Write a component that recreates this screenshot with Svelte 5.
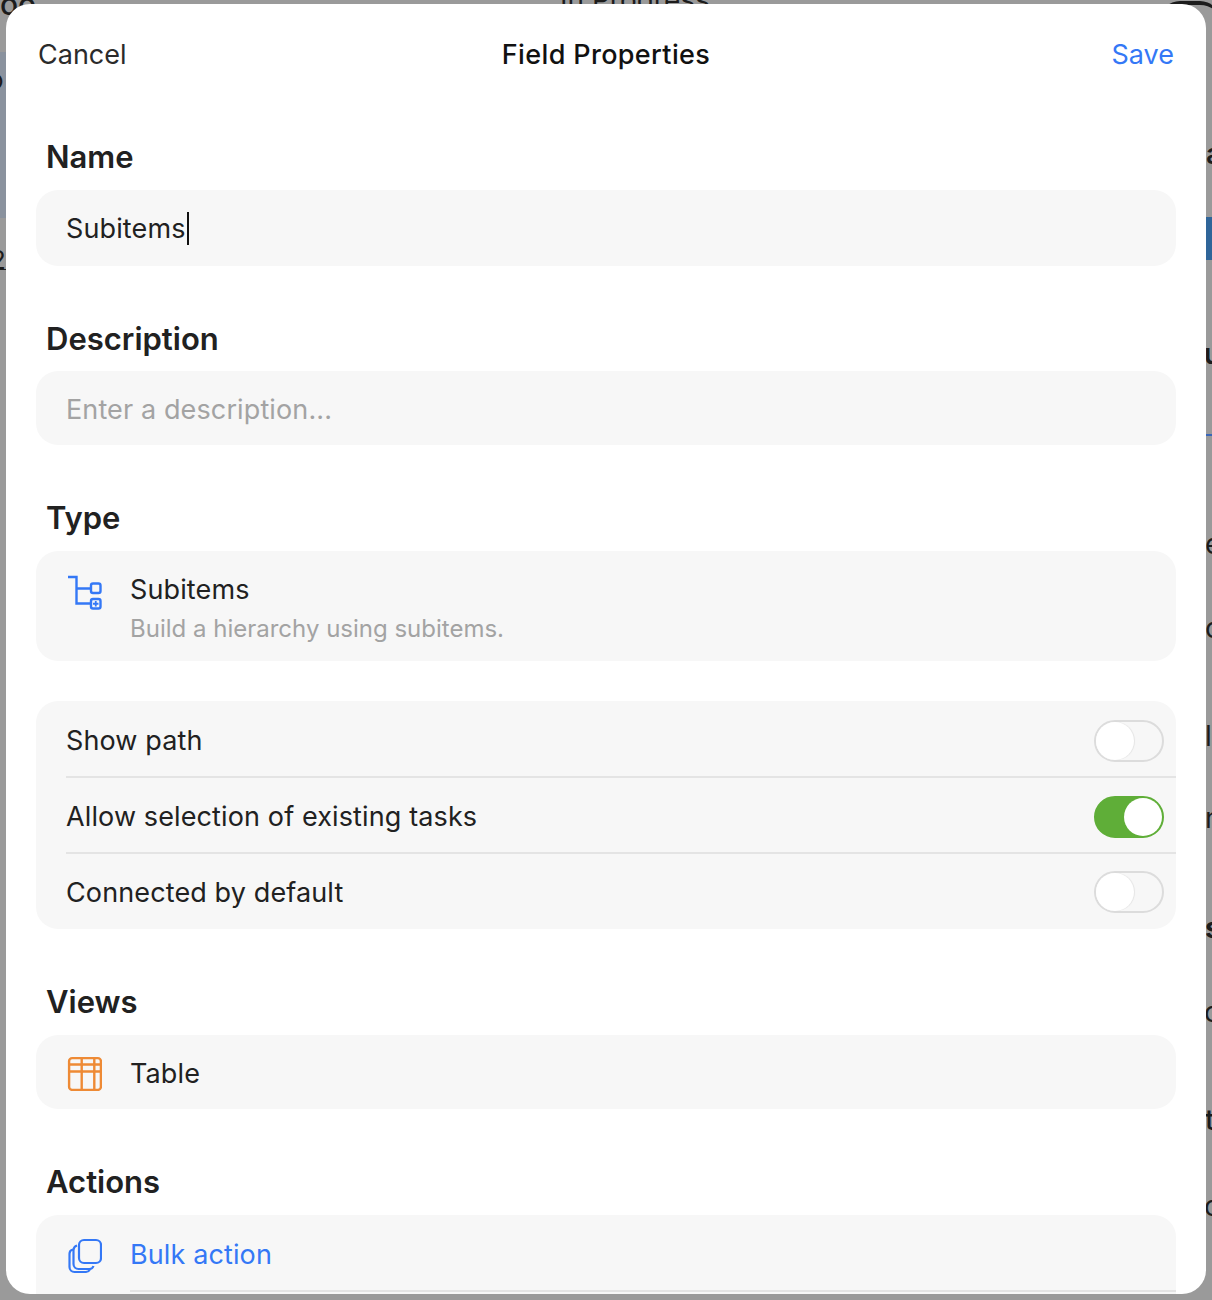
<script>
  const toggles = [
    { label: 'Show path', on: false },
    { label: 'Allow selection of existing tasks', on: true },
    { label: 'Connected by default', on: false }
  ];
  // bits of the page behind the sheet, dimmed by the backdrop
  const behind = [
    { text: 'oo', x: 0, y: -14, size: 30, weight: 500 },
    { text: 'In Progress', x: 560, y: -16, size: 28, weight: 400 },
    { text: 'o', x: -12, y: 64, size: 26, weight: 400 },
    { text: '2', x: -10, y: 244, size: 26, weight: 400 },
    { text: 'l', x: -5, y: 420, size: 26, weight: 400 },
    { text: 'a', x: 1206, y: 138, size: 28, weight: 600 },
    { text: 'u', x: 1204, y: 338, size: 28, weight: 600 },
    { text: 'e', x: 1205, y: 528, size: 28, weight: 400 },
    { text: 'c', x: 1205, y: 612, size: 28, weight: 400 },
    { text: 'll', x: 1205, y: 720, size: 28, weight: 400 },
    { text: 'n', x: 1205, y: 802, size: 28, weight: 400 },
    { text: 's', x: 1205, y: 912, size: 28, weight: 700 },
    { text: 'o', x: 1204, y: 996, size: 28, weight: 400 },
    { text: 't', x: 1205, y: 1104, size: 28, weight: 500 },
    { text: 'o', x: 1204, y: 1190, size: 28, weight: 400 }
  ];
</script>

<div class="page">
  <div class="backdrop-parts">
    <div class="blue-left"></div>
    <div class="blue-right"></div>
    <div class="blue-line"></div>
    <div class="round-corner"></div>
    <div class="under-two"></div>
    {#each behind as b}
      <span class="behind" style="left:{b.x}px;top:{b.y}px;font-size:{b.size}px;font-weight:{b.weight}">{b.text}</span>
    {/each}
  </div>

  <div class="sheet">
    <header class="bar">
      <span class="cancel">Cancel</span>
      <span class="title">Field Properties</span>
      <span class="save">Save</span>
    </header>

    <div class="content">
      <h2 class="first">Name</h2>
      <div class="field name-field"><span>Subitems</span><i class="caret"></i></div>

      <h2 class="desc-label">Description</h2>
      <div class="field placeholder">Enter a description...</div>

      <h2>Type</h2>
      <div class="field type-field">
        <svg class="icon" width="36" height="40" viewBox="0 0 36 40" fill="none" stroke="#3478f6" stroke-width="2.400" aria-hidden="true">
          <path d="M2 5h8.500v26.500h14M10.500 16.500h14" />
          <rect x="25" y="11.500" width="9.500" height="9.500" rx="2" />
          <rect x="25" y="27" width="9.500" height="9.500" rx="2" />
          <path d="M29.750 29v5.500M27 31.750h5.500" stroke-width="1.800" />
        </svg>
        <div class="type-text">
          <div>Subitems</div>
          <div class="sub">Build a hierarchy using subitems.</div>
        </div>
      </div>

      <div class="group">
        {#each toggles as t}
          <div class="row">
            <span>{t.label}</span>
            <span class="switch" class:on={t.on}><i></i></span>
          </div>
        {/each}
      </div>

      <h2 class="views-label">Views</h2>
      <div class="field icon-row">
        <svg class="icon" width="36" height="36" viewBox="0 0 36 36" fill="none" stroke="#ee8a35" stroke-width="2.400" aria-hidden="true">
          <rect x="3.100" y="3.100" width="31.800" height="31.800" rx="3" />
          <path d="M3 9.500h32M3 16.500h32M15.700 3v32M28.300 3v32" />
        </svg>
        <span>Table</span>
      </div>

      <h2 class="actions-label">Actions</h2>
      <div class="field actions">
        <div class="action-row">
          <svg class="icon" width="36" height="38" viewBox="0 0 36 38" fill="none" stroke="#3478f6" stroke-width="2.200" aria-hidden="true">
            <rect x="13" y="4" width="22" height="23" rx="5" />
            <path d="M11 9.500a5 5 0 0 0-3.500 4.500v14a5 5 0 0 0 5 5h11a4.500 4.500 0 0 0 4-3" />
            <path d="M7 13.500a4.500 4.500 0 0 0-3.500 4.500v13a5 5 0 0 0 5 5h11.500a4.500 4.500 0 0 0 4-3" />
          </svg>
          <span class="link">Bulk action</span>
        </div>
      </div>
    </div>
  </div>
</div>

<style>
  :global(body) {
    margin: 0;
  }

  .page {
    position: relative;
    width: 1212px;
    height: 1300px;
    padding: 4px 6px 6px;
    box-sizing: border-box;
    overflow: hidden;
    background: #9a9a9a;
    font-family: Inter, "Liberation Sans", sans-serif;
    color: #212121;
  }

  .backdrop-parts {
    position: absolute;
    inset: 0;
  }

  .behind {
    position: absolute;
    line-height: 1.2;
    color: #1c1c1c;
    white-space: nowrap;
  }

  .blue-left {
    position: absolute;
    left: 0;
    top: 52px;
    width: 6px;
    height: 166px;
    background: #8a929e;
  }

  .under-two {
    position: absolute;
    left: 0;
    top: 269px;
    width: 6px;
    height: 1px;
    background: #222;
  }

  .blue-right {
    position: absolute;
    left: 1206px;
    top: 217px;
    width: 6px;
    height: 43px;
    background: #2f6599;
  }

  .blue-line {
    position: absolute;
    left: 1206px;
    top: 434px;
    width: 6px;
    height: 2px;
    background: #3a66b8;
  }

  .round-corner {
    position: absolute;
    left: 1160px;
    top: 1px;
    width: 60px;
    height: 40px;
    border-top: 4px solid #1c1c1c;
    border-radius: 24px;
    box-sizing: border-box;
  }

  .sheet {
    position: relative;
    height: 1290px;
    border-radius: 24px;
    background: #fff;
    overflow: hidden;
  }

  .bar {
    display: flex;
    align-items: center;
    justify-content: space-between;
    height: 100px;
    padding: 0 32px;
    font-size: 27px;
  }

  .cancel {
    color: #2b2b2b;
  }

  .title {
    position: absolute;
    left: 0;
    right: 0;
    text-align: center;
    font-weight: 500;
    letter-spacing: 0.35px;
    color: #111;
  }

  .save {
    color: #3478f6;
  }

  .content {
    padding: 0 30px;
    font-size: 27px;
    letter-spacing: 0.12px;
  }

  h2 {
    margin: 54px 0 14px 10px;
    height: 38px;
    font-size: 31px;
    line-height: 38px;
    font-weight: 600;
    letter-spacing: 0;
    color: #212121;
  }

  h2.first {
    margin-top: 34px;
  }

  h2.desc-label {
    margin-bottom: 13px;
  }

  .field {
    display: flex;
    align-items: center;
    box-sizing: border-box;
    min-height: 74px;
    padding: 0 30px;
    border-radius: 22px;
    background: #f7f7f7;
  }

  .name-field {
    height: 76px;
  }

  .caret {
    display: block;
    width: 2px;
    height: 33px;
    margin-left: 1px;
    background: #111;
  }

  .placeholder {
    padding-top: 2px;
    color: #a3a3a3;
  }

  .type-field {
    height: 110px;
    align-items: flex-start;
    padding-top: 21px;
  }

  .icon {
    flex: none;
    margin-right: 28px;
  }

  .type-text {
    margin-top: 1px;
    line-height: 34px;
  }

  .sub {
    margin-top: 7px;
    font-size: 24px;
    line-height: 30px;
    letter-spacing: 0;
    color: #a3a3a3;
  }

  .group {
    margin-top: 40px;
    padding: 1px 0 0 30px;
    border-radius: 22px;
    background: #f7f7f7;
  }

  .row {
    display: flex;
    align-items: center;
    justify-content: space-between;
    box-sizing: border-box;
    height: 76px;
    padding: 3px 12px 0 0;
    border-bottom: 2px solid #e4e4e4;
  }

  .row:last-child {
    height: 75px;
    padding-top: 1px;
    border-bottom: 0;
  }

  .switch {
    display: block;
    position: relative;
    width: 70px;
    height: 42px;
    box-sizing: border-box;
    border: 2px solid #dcdcdc;
    border-radius: 21px;
    background: #f7f7f7;
  }

  .switch i {
    position: absolute;
    left: 0;
    top: 0;
    width: 38px;
    height: 38px;
    border-radius: 50%;
    background: #fff;
    box-shadow: 1px 0 1px rgba(0, 0, 0, 0.08);
  }

  .switch.on {
    border-color: #5fae38;
    background: #5fae38;
  }

  .switch.on i {
    left: 28px;
    box-shadow: none;
  }

  .icon-row {
    height: 74px;
    padding-top: 2px;
  }

  .actions {
    display: block;
    height: 120px;
    padding: 0 0 0 30px;
  }

  .action-row {
    display: flex;
    align-items: center;
    height: 76px;
    padding-top: 3px;
    box-sizing: border-box;
  }

  .link {
    position: relative;
    color: #3478f6;
  }

  .link::after {
    content: '';
    position: absolute;
    left: 0;
    top: 52px;
    width: 1046px;
    height: 2px;
    background: #e4e4e4;
  }
</style>
